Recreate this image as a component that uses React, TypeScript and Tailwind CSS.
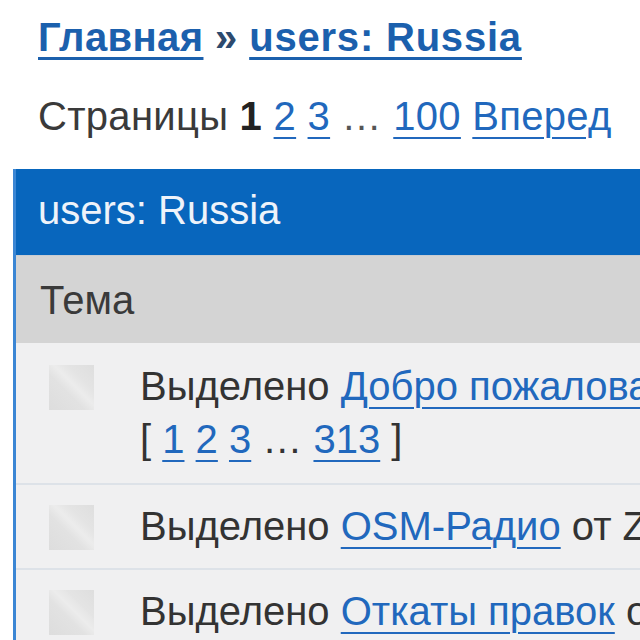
import React from "react";

const linkB = "text-[#1b60ad] underline decoration-[3px] underline-offset-[6px]";
const link = "text-[#2168bd] underline decoration-2 underline-offset-[7px]";

function Icon() {
  return (
    <div
      className="w-[45px] h-[45px] shrink-0"
      style={{
        background:
          "linear-gradient(45deg, #dddddd 0%, #e2e2e2 40%, #ececec 55%, #e4e4e4 70%, #dedede 100%)",
      }}
    />
  );
}

function Row({ children, pad, top }: { children: React.ReactNode; pad: string; top: string }) {
  return (
    <div className={`flex items-start bg-[#f0f0f1] border-b-2 border-[#dde2e8] ${pad}`}>
      <div className={`pl-[33px] w-[124px] shrink-0 ${top}`}>
        <Icon />
      </div>
      <div className="text-[40px] leading-[53px] text-[#333] whitespace-nowrap">{children}</div>
    </div>
  );
}

export default function App() {
  return (
    <div
      className="w-[640px] h-[640px] overflow-hidden bg-white"
      style={{ fontFamily: '"Liberation Sans", Arial, sans-serif' }}
    >
      <div className="w-[1000px]">
        <div className="pl-[38px] pt-[14px] text-[40px] font-bold leading-[46px] whitespace-nowrap tracking-[0.4px]">
          <a className={linkB}>Главная</a>
          <span className="text-[#2d4a6e]"> » </span>
          <a className={`${linkB} tracking-[0.8px]`}>users: Russia</a>
        </div>
        <div className="pl-[38px] mt-[33px] text-[40px] leading-[46px] text-[#3a3a3a] whitespace-nowrap tracking-[0.3px]">
          Страницы <b className="text-[#222]">1</b> <a className={link}>2</a> <a className={link}>3</a>{" "}
          <span className="text-[#555]">…</span> <a className={link}>100</a> <a className={link}>Вперед</a>
        </div>
        <div className="ml-[13px] mt-[30px] border-l-[3px] border-[#3b86d4]">
          <div className="bg-[#0866bd] h-[86px] pl-[22px] pt-[18px] text-[40px] leading-[46px] text-[#eef3fa] whitespace-nowrap">
            users: Russia
          </div>
          <div className="bg-[#d4d4d4] h-[88px] flex items-center pl-[24px] text-[40px] leading-[46px] text-[#3a3a3a] border-t border-[#c8ccd2]">
            Тема
          </div>
          <Row pad="pt-[17px] pb-[17px]" top="pt-[5px]">
            <div>
              Выделено <a className={link}>Добро пожаловать!</a> от Hind
            </div>
            <div>
              [ <a className={link}>1</a> <a className={link}>2</a> <a className={link}>3</a> … <a className={link}>313</a> ]
            </div>
          </Row>
          <Row pad="pt-[15px] pb-[15px]" top="pt-[5px]">
            <div>
              Выделено <a className={link}>OSM-Радио</a> от Zkir
            </div>
          </Row>
          <Row pad="pt-[15px] pb-[15px]" top="pt-[5px]">
            <div>
              Выделено <a className={link}>Откаты правок</a> от Zkir
            </div>
          </Row>
        </div>
      </div>
    </div>
  );
}
